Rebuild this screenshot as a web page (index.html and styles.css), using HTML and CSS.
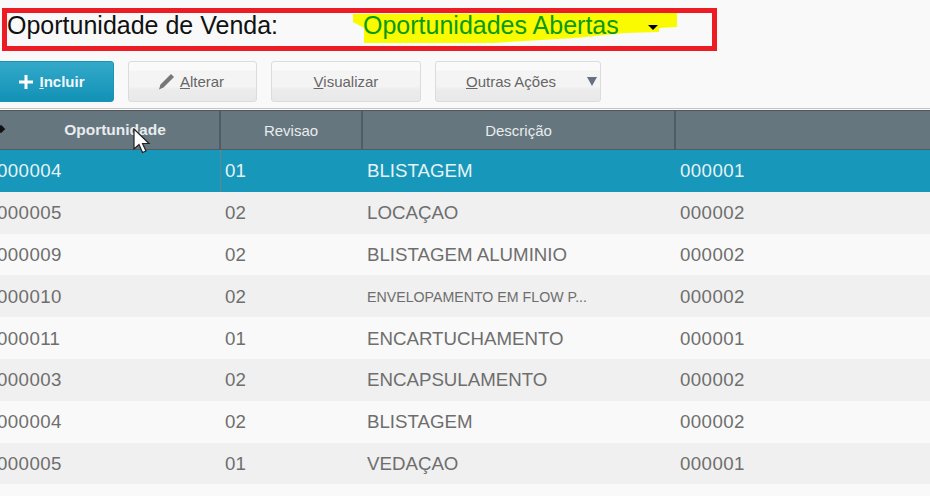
FILE: index.html
```html
<!DOCTYPE html>
<html lang="en">
<head>
<meta charset="UTF-8">
<meta name="viewport" content="width=device-width, initial-scale=1.0">
<title>Oportunidade de Venda</title>
<link rel="stylesheet" href="styles.css">
</head>
<body>

<div class="filter">
    <svg class="marker" width="340" height="40" viewBox="0 0 340 40">
        <polygon points="0,1 324,0 324,14 306,15 306,19 272,20 222,25 140,30 11,30 11,15 0,9"/>
    </svg>
    <span class="filter-label">Oportunidade de Venda:</span>
    <span class="filter-value">Oportunidades Abertas</span>
    <span class="filter-caret"></span>
</div>

<div class="toolbar">
    <button class="button primary">
        <svg width="16" height="16" viewBox="0 0 16 16"><path d="M6.500 1h3v5.500H15v3H9.500V15h-3V9.500H1v-3h5.500z" fill="#fff"/></svg>
        <span><u>I</u>ncluir</span>
    </button>
    <button class="button alterar">
        <svg width="18" height="18" viewBox="0 0 18 18"><path d="M14 1l3 3L6.500 14.500 2 16.500l1.500-5z" fill="#777"/></svg>
        <span><u>A</u>lterar</span>
    </button>
    <button class="button visualizar"><span><u>V</u>isualizar</span></button>
    <button class="button outras">
        <span><u>O</u>utras Ações</span>
        <span class="outras-arrow"></span>
    </button>
</div>

<div class="grid">
    <div class="row head">
        <div class="cell sorted"><span class="sort-mark"></span>Oportunidade</div>
        <div class="cell">Revisao</div>
        <div class="cell">Descrição</div>
        <div class="cell"></div>
    </div>
    <div class="row selected">
        <div class="cell focus">000004</div><div class="cell">01</div><div class="cell">BLISTAGEM</div><div class="cell">000001</div>
    </div>
    <div class="row">
        <div class="cell">000005</div><div class="cell">02</div><div class="cell">LOCAÇAO</div><div class="cell">000002</div>
    </div>
    <div class="row">
        <div class="cell">000009</div><div class="cell">02</div><div class="cell">BLISTAGEM ALUMINIO</div><div class="cell">000002</div>
    </div>
    <div class="row">
        <div class="cell">000010</div><div class="cell">02</div><div class="cell small">ENVELOPAMENTO EM FLOW P...</div><div class="cell">000002</div>
    </div>
    <div class="row">
        <div class="cell">000011</div><div class="cell">01</div><div class="cell">ENCARTUCHAMENTO</div><div class="cell">000001</div>
    </div>
    <div class="row">
        <div class="cell">000003</div><div class="cell">02</div><div class="cell">ENCAPSULAMENTO</div><div class="cell">000002</div>
    </div>
    <div class="row">
        <div class="cell">000004</div><div class="cell">02</div><div class="cell">BLISTAGEM</div><div class="cell">000002</div>
    </div>
    <div class="row">
        <div class="cell">000005</div><div class="cell">01</div><div class="cell">VEDAÇAO</div><div class="cell">000001</div>
    </div>
</div>

<svg class="pointer" width="20" height="28" viewBox="0 0 20 28">
    <path d="M1 1v20l5-4.500 3.500 8 3.500-1.500-3.500-7.500H16z" fill="#fff" stroke="#222" stroke-width="1.200"/>
</svg>

</body>
</html>
```

FILE: styles.css
```css
html, body {
    margin: 0;
    height: 100%;
    overflow: hidden;
}

body {
    position: relative;
    background-color: #f9f9f9;
    font-family: 'Liberation Sans', Arial, sans-serif;
    padding-top: 8px;
    box-sizing: border-box;
}

.filter {
    position: relative;
    display: flex;
    align-items: center;
    box-sizing: border-box;
    width: 715px;
    height: 43px;
    margin-left: 2px;
    padding: 0 0 8px 0;
    border: 5px solid #ed1c24;
    font-size: 25px;
}

.marker {
    position: absolute;
    left: 346px;
    top: 0;
    fill: #fbfb00;
}

.filter-label {
    position: relative;
    width: 356px;
    color: #111;
}

.filter-value {
    position: relative;
    color: #0a9a0a;
}

.filter-caret {
    position: relative;
    margin-left: 29px;
    margin-top: 3px;
    border-top: 5px solid #000;
    border-left: 5px solid transparent;
    border-right: 5px solid transparent;
}

.toolbar {
    display: flex;
    gap: 14px;
    height: 48px;
    margin-top: 10px;
    margin-left: -6px;
    box-sizing: border-box;
    border-bottom: 1px solid #c4c4c4;
    padding-bottom: 7px;
}

.button {
    display: flex;
    align-items: center;
    justify-content: center;
    gap: 5px;
    box-sizing: border-box;
    height: 41px;
    padding: 0;
    border: 1px solid #dcdcdc;
    border-radius: 3px;
    background: linear-gradient(#fafafa 0, #fafafa 20%, #f4f4f4 24%, #f4f4f4 62%, #ebebeb 72%, #e9e9e9 100%);
    color: #666;
    font-family: inherit;
    font-size: 15px;
}

.primary {
    width: 120px;
    padding-right: 5px;
    border-color: #1a93b5;
    background: linear-gradient(#33a9c9, #1292b6);
    color: #f2f8fa;
    font-weight: bold;
}

.alterar {
    width: 129px;
}

.alterar svg {
    margin-left: -4px;
}

.visualizar {
    width: 150px;
}

.outras {
    position: relative;
    width: 166px;
    padding-right: 14px;
}

.outras-arrow {
    position: absolute;
    right: 3px;
    top: 15px;
    border-top: 9px solid #667080;
    border-left: 5px solid transparent;
    border-right: 5px solid transparent;
}

.grid {
    margin-left: -5px;
    margin-top: 1px;
}

.row {
    display: grid;
    grid-template-columns: 226px 142px 313px 1fr;
    height: 41.800px;
    align-items: center;
    background-color: #f9f9f9;
    color: #6e6e6e;
    font-size: 18.700px;
}

.row:nth-child(odd) {
    background-color: #f0f0f0;
}

.cell {
    box-sizing: border-box;
    padding: 1px 0 0 4px;
    white-space: nowrap;
}

.cell:nth-child(1) {
    padding-left: 2px;
    letter-spacing: 0.400px;
}

.cell:nth-child(4) {
    letter-spacing: 0.400px;
}

.small {
    font-size: 14.200px;
}

.row.head {
    height: 40px;
    align-items: stretch;
    background-color: #66767e;
    color: #e8ecee;
    font-size: 15px;
    border-top: 1px solid #555;
    box-sizing: border-box;
}

.head .cell {
    display: flex;
    align-items: center;
    justify-content: center;
    padding: 0;
    letter-spacing: 0;
    border-right: 2px solid #4f5c63;
    border-bottom: 1px solid #4f5c63;
}

.head .cell:last-child {
    border-right: none;
}

.head .sorted {
    position: relative;
    padding-left: 16px;
    font-size: 15.500px;
    font-weight: bold;
}

.sort-mark {
    position: absolute;
    left: 3px;
    top: 15px;
    width: 6px;
    height: 6px;
    background-color: #111;
    transform: rotate(45deg);
}

.row.selected {
    background-color: #1797b9;
    color: #e6f3f7;
}

.focus {
    height: 100%;
    display: flex;
    align-items: center;
    border-right: 1px dotted #b0705a;
}

.pointer {
    position: absolute;
    left: 133px;
    top: 128px;
}
```
